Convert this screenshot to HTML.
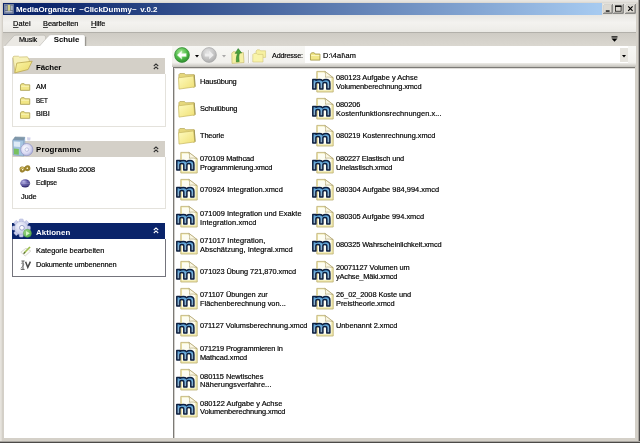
<!DOCTYPE html>
<html lang="de"><head><meta charset="utf-8"><title>MediaOrganizer ~ClickDummy~ v.0.2</title>
<style>
html,body{margin:0;padding:0;background:#d4d0c8;}
body{width:640px;height:443px;position:relative;overflow:hidden;background:#d4d0c8;font-family:"Liberation Sans",sans-serif;font-size:7.4px;line-height:9.0px;color:#000;}
#w{position:absolute;left:0;top:0;width:640px;height:443px;overflow:hidden;filter:blur(0.4px);}
.a{position:absolute;}
.t{position:absolute;white-space:nowrap;-webkit-text-stroke:0.18px currentColor;}
.b{font-weight:bold;-webkit-text-stroke:0;}
.i{position:absolute;display:block;overflow:visible;}
u{text-decoration:underline;text-underline-offset:1px;text-decoration-thickness:0.6px;text-decoration-color:#444;}
</style></head><body><div id="w">
<svg width="0" height="0" style="position:absolute"><defs>
<linearGradient id="fg" x1="0" y1="0" x2="1" y2="1"><stop offset="0" stop-color="#fefbc0"/><stop offset="1" stop-color="#f0e074"/></linearGradient>
<linearGradient id="mg" x1="0" y1="0" x2="0" y2="1"><stop offset="0" stop-color="#4a94cc"/><stop offset="0.4" stop-color="#7ab6e0"/><stop offset="1" stop-color="#98a8ba"/></linearGradient>
<linearGradient id="of" x1="0" y1="0" x2="1" y2="1"><stop offset="0" stop-color="#fbf6a8"/><stop offset="1" stop-color="#ead868"/></linearGradient>
<radialGradient id="cd" cx="0.4" cy="0.4" r="0.7"><stop offset="0" stop-color="#ffffff"/><stop offset="0.6" stop-color="#d8d8f2"/><stop offset="1" stop-color="#a0a4d4"/></radialGradient>
<radialGradient id="gg" cx="0.4" cy="0.35" r="0.75"><stop offset="0" stop-color="#f6f7fd"/><stop offset="0.7" stop-color="#ccd0ea"/><stop offset="1" stop-color="#a6acd4"/></radialGradient>
<linearGradient id="gp" x1="0" y1="0" x2="1" y2="1"><stop offset="0" stop-color="#a8e090"/><stop offset="1" stop-color="#48a83c"/></linearGradient>
<radialGradient id="ec" cx="0.35" cy="0.3" r="0.8"><stop offset="0" stop-color="#b4b0e6"/><stop offset="0.5" stop-color="#4c4496"/><stop offset="1" stop-color="#28225e"/></radialGradient>
<radialGradient id="bk" cx="0.42" cy="0.32" r="0.75"><stop offset="0" stop-color="#a4e894"/><stop offset="0.55" stop-color="#4cb846"/><stop offset="1" stop-color="#2a862c"/></radialGradient>
<radialGradient id="fw" cx="0.42" cy="0.32" r="0.75"><stop offset="0" stop-color="#e6e6e6"/><stop offset="0.6" stop-color="#c2c2c2"/><stop offset="1" stop-color="#a6a6a6"/></radialGradient>
</defs></svg>
<div class="a" style="left:0;top:0;width:640px;height:443px;background:#d4d0c8;"></div>
<div class="a" style="left:0;top:0;width:640px;height:1px;background:#e8e6e2;"></div>
<div class="a" style="left:0;top:1px;width:640px;height:1px;background:#e4e2dd;"></div>
<div class="a" style="left:0;top:2px;width:640px;height:1px;background:#dcd9d3;"></div>
<div class="a" style="left:0;top:0;width:1px;height:443px;background:#e6e3dd;"></div>
<div class="a" style="left:1px;top:0;width:1px;height:443px;background:#e0ddd6;"></div>
<div class="a" style="left:638px;top:0;width:1px;height:443px;background:#a8a5a0;"></div>
<div class="a" style="left:639px;top:0;width:1px;height:443px;background:#4c4a48;"></div>
<div class="a" style="left:0;top:441px;width:640px;height:1px;background:#a8a5a0;"></div>
<div class="a" style="left:0;top:442px;width:640px;height:1px;background:#4c4a48;"></div>
<div class="a" style="left:2.8px;top:2.8px;width:633.6px;height:11.9px;background:linear-gradient(to right,#0a246a 0%,#0a246a 6%,#a6caf0 94%,#a6caf0 100%);"></div>
<div class="a" style="left:601.8px;top:2.8px;width:34.6px;height:11.9px;background:#e2e0da;"></div>
<svg class="i" style="left:4.3px;top:3.8px" width="9.8" height="9.8" viewBox="0 0 9.8 9.8">
<rect x="0" y="0" width="9.8" height="9.8" fill="#7c8aa4"/>
<rect x="0.9" y="0.9" width="8" height="8" fill="#4c5a74"/>
<rect x="3.6" y="1" width="2.8" height="5.8" fill="#d2d088"/>
<rect x="1.2" y="1.4" width="2" height="5" fill="#8e9ab4"/>
<rect x="6.8" y="1.4" width="2" height="5" fill="#a8b0c4"/>
<rect x="1.2" y="7.2" width="7.4" height="1.2" fill="#c8cce0"/>
</svg>
<div class="t b" style="left:16.00px;top:5px;font-size:7.9px;color:#fff;word-spacing:1.6px;letter-spacing:0.02px;">MediaOrganizer ~ClickDummy~ v.0.2</div>
<svg class="i" style="left:602.6px;top:4px" width="9.6" height="9.6" viewBox="0 0 9.6 9.6">
<rect x="0" y="0" width="9.6" height="9.6" fill="#505050"/>
<rect x="0" y="0" width="9.0" height="9" fill="#ffffff"/>
<rect x="0.6" y="0.6" width="8.4" height="8.4" fill="#8c8a86"/>
<rect x="0.6" y="0.6" width="7.8" height="7.8" fill="#dcd9d2"/>
<rect x="2.8" y="6.4" width="3.8" height="1.3" fill="#000"/></svg>
<svg class="i" style="left:612.6px;top:4px" width="10.6" height="9.6" viewBox="0 0 10.6 9.6">
<rect x="0" y="0" width="10.6" height="9.6" fill="#505050"/>
<rect x="0" y="0" width="10.0" height="9" fill="#ffffff"/>
<rect x="0.6" y="0.6" width="9.4" height="8.4" fill="#8c8a86"/>
<rect x="0.6" y="0.6" width="8.799999999999999" height="7.8" fill="#dcd9d2"/>
<rect x="2.5" y="2" width="5.6" height="5.2" fill="none" stroke="#000" stroke-width="0.7"/><rect x="2.2" y="1.6" width="6.2" height="1.3" fill="#000"/></svg>
<svg class="i" style="left:625px;top:4px" width="10.6" height="9.6" viewBox="0 0 10.6 9.6">
<rect x="0" y="0" width="10.6" height="9.6" fill="#505050"/>
<rect x="0" y="0" width="10.0" height="9" fill="#ffffff"/>
<rect x="0.6" y="0.6" width="9.4" height="8.4" fill="#8c8a86"/>
<rect x="0.6" y="0.6" width="8.799999999999999" height="7.8" fill="#dcd9d2"/>
<path d="M3.2 2.4 L7.6 6.8 M7.6 2.4 L3.2 6.8" stroke="#000" stroke-width="1.1"/></svg>
<div class="a" style="left:2.8px;top:14.7px;width:633.6px;height:17.2px;background:linear-gradient(to bottom,#e8e7e3 0%,#f3f2ef 45%,#efeeea 80%,#eae9e5 100%);"></div>
<div class="t" style="left:13.00px;top:19px;letter-spacing:0.107px;"><u>D</u>atei</div>
<div class="t" style="left:43.00px;top:19px;letter-spacing:-0.047px;"><u>B</u>earbeiten</div>
<div class="t" style="left:91.00px;top:19px;letter-spacing:-0.099px;"><u>H</u>ilfe</div>
<div class="a" style="left:2.8px;top:31.7px;width:633.6px;height:14px;background:linear-gradient(to bottom,#cdcac3 0%,#d4d1ca 50%,#dad7d0 100%);"></div>
<div class="a" style="left:2.8px;top:31.7px;width:633.6px;height:0.8px;background:#b2b0aa;"></div>
<svg class="i" style="left:0;top:31.6px" width="120" height="16" viewBox="0 0 120 16"><path d="M4.2 14.6 L13.6 4.2 C14.2 3.5 15 3.2 16 3.2 L43.4 3.2 C44.6 3.2 45.4 4 45.6 5.2 L45.6 14.6 Z" fill="#ebe9e4" stroke="#b4b2ac" stroke-width="0.6"/><path d="M38.8 14.8 L48.4 4 C49.2 3.1 50.2 2.7 51.4 2.7 L82.8 2.7 C84.2 2.7 85.2 3.5 85.2 4.9 L85.2 14.8 Z" fill="#ffffff" stroke="#bab8b2" stroke-width="0.6"/><path d="M85.7 4.8 L85.7 14" stroke="#7c7a74" stroke-width="0.8"/><rect x="3.6" y="14" width="116" height="2" fill="#ffffff"/></svg>
<div class="t" style="left:19.30px;top:35px;letter-spacing:-0.200px;transform:scaleX(0.983);transform-origin:0 0;">Musik</div>
<div class="t b" style="left:53.80px;top:35px;font-size:7.9px;letter-spacing:-0.079px;">Schule</div>
<svg class="i" style="left:611px;top:35.8px" width="7" height="6.4" viewBox="0 0 7 6.4"><rect x="0.5" y="0.3" width="6" height="1.2" fill="#000"/><path d="M0.5 2.4 L6.5 2.4 L3.5 5.8 Z" fill="#000"/></svg>
<div class="a" style="left:3.6px;top:45.6px;width:170px;height:392.1px;background:#ffffff;"></div>
<div class="a" style="left:172px;top:45.7px;width:464.4px;height:21.4px;background:linear-gradient(to bottom,#f7f7f4 0%,#f2f1ed 78%,#e4e2dd 86%,#c2c0ba 100%);"></div>
<svg class="i" style="left:174.3px;top:47.1px" width="16" height="16" viewBox="0 0 16 16">
<circle cx="8" cy="8" r="7.4" fill="url(#bk)" stroke="#2e842e" stroke-width="0.7"/>
<path d="M3.2 8 L7.8 3.8 L7.8 6.4 L12.2 6.4 L12.2 9.6 L7.8 9.6 L7.8 12.2 Z" fill="#ffffff" stroke="#c8f0c0" stroke-width="0.5"/>
</svg>
<svg class="i" style="left:201.4px;top:47.1px" width="16" height="16" viewBox="0 0 16 16">
<circle cx="8" cy="8" r="7.4" fill="url(#fw)" stroke="#a8a8a8" stroke-width="0.7"/>
<path d="M12.8 8 L8.2 3.8 L8.2 6.4 L3.8 6.4 L3.8 9.6 L8.2 9.6 L8.2 12.2 Z" fill="#eeeeee"/>
</svg>
<svg class="i" style="left:230.5px;top:48px" width="14" height="16.5" viewBox="0 0 14 16.5">
<path d="M1 15.4 L0.8 5.2 L2 3.8 L4.6 3.8 L5.6 5 L12.4 4.6 L13 14.6 Z" fill="#f5f0a4" stroke="#c8bc70" stroke-width="0.7"/>
<path d="M5.4 14 C5.2 10 5.6 7.4 6.8 5.2 L4.2 5.4 L7.2 0.6 L10.6 5 L8.6 5 C7.6 7.4 7.6 10 8.2 13.6 Z" fill="#4aa23a" stroke="#2e7a28" stroke-width="0.6" stroke-linejoin="round"/>
</svg>
<svg class="i" style="left:251.5px;top:49px" width="15" height="14" viewBox="0 0 15 14">
<path d="M4 8.4 L4 2 L5.2 0.8 L7.6 0.8 L8.6 1.8 L13.6 1.8 L13.6 8.4 Z" fill="#f6f0a0" stroke="#d0c478" stroke-width="0.6"/>
<path d="M0.8 13 L0.8 5.6 L2 4.4 L4.6 4.4 L5.6 5.4 L11 5.4 L11 13 Z" fill="#f9f4aa" stroke="#d0c478" stroke-width="0.6"/>
</svg>
<svg class="i" style="left:194.5px;top:55px" width="4" height="3" viewBox="0 0 4 3"><path d="M0 0 L4 0 L2 2.5 Z" fill="#000"/></svg>
<svg class="i" style="left:221.5px;top:55px" width="4" height="3" viewBox="0 0 4 3"><path d="M0 0 L4 0 L2 2.5 Z" fill="#a8a8a8"/></svg>
<div class="a" style="left:248px;top:49.5px;width:0.7px;height:13.5px;background:#cfccc5;"></div>
<div class="a" style="left:248.7px;top:49.5px;width:0.7px;height:13.5px;background:#ffffff;"></div>
<div class="t" style="left:271.50px;top:51px;letter-spacing:-0.200px;transform:scaleX(0.978);transform-origin:0 0;">Addresse:</div>
<div class="a" style="left:305px;top:46px;width:323px;height:16.6px;background:#ffffff;"></div>
<svg class="i" style="left:310.20px;top:51.60px" width="10.6" height="8.6" viewBox="0 0 11 8.5" preserveAspectRatio="none">
<path d="M0.5 8 L0.5 2.2 L1.6 0.8 L4.4 0.8 L5.4 2 L10.3 2 L10.3 8 Z" fill="#f1e686" stroke="#a89c4c" stroke-width="0.9"/>
<path d="M1.2 3.5 L9.6 3.5" stroke="#fbf6c0" stroke-width="1"/>
</svg>
<div class="t" style="left:323.00px;top:51px;letter-spacing:0.106px;">D:\4aI\am</div>
<div class="a" style="left:620px;top:48.4px;width:7.6px;height:13.6px;background:#e6e4de;"></div>
<svg class="i" style="left:621.6px;top:54.6px" width="4" height="3" viewBox="0 0 4 3"><path d="M0 0 L4 0 L2 2.5 Z" fill="#000"/></svg>
<div class="a" style="left:173px;top:66.9px;width:461.8px;height:370.8px;background:#ffffff;"></div>
<div class="a" style="left:173px;top:66.9px;width:461.8px;height:1px;background:#7c7a76;"></div>
<div class="a" style="left:173px;top:67px;width:1px;height:371px;background:#7c7a76;"></div>
<div class="a" style="left:174px;top:68px;width:1px;height:370px;background:#d2d0cc;"></div>
<div class="a" style="left:174px;top:68px;width:461px;height:1px;background:#e0deda;"></div>
<svg class="i" style="left:176.20px;top:70.40px" width="22" height="22" viewBox="0 0 22 22">
<path d="M2.9 8 L2.9 4.6 L3.9 3.5 L8.5 3.5 L9.6 4.8 L18.2 4.6 L19.1 16.6 L17.6 17.2 Z" fill="#e6d87c" stroke="#b4a65a" stroke-width="0.7"/>
<path d="M2.5 7.8 L17.6 5.9 L18.8 16.9 L3 19.1 Z" fill="url(#fg)" stroke="#c6b65e" stroke-width="0.7"/>
<path d="M18.3 5 L19.1 16.6" stroke="#9a9050" stroke-width="0.8"/>
</svg>
<div class="t" style="left:200.00px;top:77px;letter-spacing:-0.135px;">Hausübung</div>
<svg class="i" style="left:176.20px;top:97.53px" width="22" height="22" viewBox="0 0 22 22">
<path d="M2.9 8 L2.9 4.6 L3.9 3.5 L8.5 3.5 L9.6 4.8 L18.2 4.6 L19.1 16.6 L17.6 17.2 Z" fill="#e6d87c" stroke="#b4a65a" stroke-width="0.7"/>
<path d="M2.5 7.8 L17.6 5.9 L18.8 16.9 L3 19.1 Z" fill="url(#fg)" stroke="#c6b65e" stroke-width="0.7"/>
<path d="M18.3 5 L19.1 16.6" stroke="#9a9050" stroke-width="0.8"/>
</svg>
<div class="t" style="left:200.00px;top:104px;letter-spacing:-0.175px;">Schulübung</div>
<svg class="i" style="left:176.20px;top:124.66px" width="22" height="22" viewBox="0 0 22 22">
<path d="M2.9 8 L2.9 4.6 L3.9 3.5 L8.5 3.5 L9.6 4.8 L18.2 4.6 L19.1 16.6 L17.6 17.2 Z" fill="#e6d87c" stroke="#b4a65a" stroke-width="0.7"/>
<path d="M2.5 7.8 L17.6 5.9 L18.8 16.9 L3 19.1 Z" fill="url(#fg)" stroke="#c6b65e" stroke-width="0.7"/>
<path d="M18.3 5 L19.1 16.6" stroke="#9a9050" stroke-width="0.8"/>
</svg>
<div class="t" style="left:200.00px;top:131px;letter-spacing:-0.137px;">Theorie</div>
<svg class="i" style="left:176.00px;top:151.99px" width="23" height="23" viewBox="0 0 23 23">
<path d="M4.8 0.4 L12.9 0.4 L21.2 6.7 L21.2 21 L4.8 21 Z" fill="#efe8aa" stroke="#bcae72" stroke-width="0.8" stroke-linejoin="round"/>
<path d="M6 1.6 L12.4 1.6 L19.3 7 L19.3 19.2 L6 19.2 Z" fill="#fdfdf2"/>
<path d="M12.9 0.4 C13.6 2.4 13.8 4.4 13.4 6.3 C16 5.8 18.6 6 21.2 6.7 Z" fill="#fbf8e4" stroke="#a89a68" stroke-width="0.6" stroke-linejoin="round"/>
<path d="M0.8 18 V8.6 H3.9 V9.3 C4.8 8.7 5.9 8.5 7.2 8.5 C8.8 8.5 9.9 8.9 10.6 9.7 C11.4 8.9 12.6 8.5 14 8.5 C16.6 8.5 17.9 10 17.9 12.4 V18 H14.8 V12.9 C14.8 11.8 14.2 11.4 12.85 11.4 C11.5 11.4 10.9 11.8 10.9 12.9 V18 H7.8 V12.9 C7.8 11.8 7.2 11.4 5.85 11.4 C4.5 11.4 3.9 11.8 3.9 12.9 V18 Z" fill="url(#mg)" stroke="#0e2040" stroke-width="1.5" stroke-linejoin="round"/>
</svg>
<div class="t" style="left:200.00px;top:154px;letter-spacing:-0.069px;">070109 Mathcad</div>
<div class="t" style="left:200.00px;top:163px;letter-spacing:-0.130px;">Programmierung.xmcd</div>
<svg class="i" style="left:176.00px;top:179.12px" width="23" height="23" viewBox="0 0 23 23">
<path d="M4.8 0.4 L12.9 0.4 L21.2 6.7 L21.2 21 L4.8 21 Z" fill="#efe8aa" stroke="#bcae72" stroke-width="0.8" stroke-linejoin="round"/>
<path d="M6 1.6 L12.4 1.6 L19.3 7 L19.3 19.2 L6 19.2 Z" fill="#fdfdf2"/>
<path d="M12.9 0.4 C13.6 2.4 13.8 4.4 13.4 6.3 C16 5.8 18.6 6 21.2 6.7 Z" fill="#fbf8e4" stroke="#a89a68" stroke-width="0.6" stroke-linejoin="round"/>
<path d="M0.8 18 V8.6 H3.9 V9.3 C4.8 8.7 5.9 8.5 7.2 8.5 C8.8 8.5 9.9 8.9 10.6 9.7 C11.4 8.9 12.6 8.5 14 8.5 C16.6 8.5 17.9 10 17.9 12.4 V18 H14.8 V12.9 C14.8 11.8 14.2 11.4 12.85 11.4 C11.5 11.4 10.9 11.8 10.9 12.9 V18 H7.8 V12.9 C7.8 11.8 7.2 11.4 5.85 11.4 C4.5 11.4 3.9 11.8 3.9 12.9 V18 Z" fill="url(#mg)" stroke="#0e2040" stroke-width="1.5" stroke-linejoin="round"/>
</svg>
<div class="t" style="left:200.00px;top:185px;letter-spacing:0.063px;">070924 Integration.xmcd</div>
<svg class="i" style="left:176.00px;top:206.25px" width="23" height="23" viewBox="0 0 23 23">
<path d="M4.8 0.4 L12.9 0.4 L21.2 6.7 L21.2 21 L4.8 21 Z" fill="#efe8aa" stroke="#bcae72" stroke-width="0.8" stroke-linejoin="round"/>
<path d="M6 1.6 L12.4 1.6 L19.3 7 L19.3 19.2 L6 19.2 Z" fill="#fdfdf2"/>
<path d="M12.9 0.4 C13.6 2.4 13.8 4.4 13.4 6.3 C16 5.8 18.6 6 21.2 6.7 Z" fill="#fbf8e4" stroke="#a89a68" stroke-width="0.6" stroke-linejoin="round"/>
<path d="M0.8 18 V8.6 H3.9 V9.3 C4.8 8.7 5.9 8.5 7.2 8.5 C8.8 8.5 9.9 8.9 10.6 9.7 C11.4 8.9 12.6 8.5 14 8.5 C16.6 8.5 17.9 10 17.9 12.4 V18 H14.8 V12.9 C14.8 11.8 14.2 11.4 12.85 11.4 C11.5 11.4 10.9 11.8 10.9 12.9 V18 H7.8 V12.9 C7.8 11.8 7.2 11.4 5.85 11.4 C4.5 11.4 3.9 11.8 3.9 12.9 V18 Z" fill="url(#mg)" stroke="#0e2040" stroke-width="1.5" stroke-linejoin="round"/>
</svg>
<div class="t" style="left:200.00px;top:209px;letter-spacing:0.031px;">071009 Integration und Exakte</div>
<div class="t" style="left:200.00px;top:218px;letter-spacing:0.122px;">Integration.xmcd</div>
<svg class="i" style="left:176.00px;top:233.38px" width="23" height="23" viewBox="0 0 23 23">
<path d="M4.8 0.4 L12.9 0.4 L21.2 6.7 L21.2 21 L4.8 21 Z" fill="#efe8aa" stroke="#bcae72" stroke-width="0.8" stroke-linejoin="round"/>
<path d="M6 1.6 L12.4 1.6 L19.3 7 L19.3 19.2 L6 19.2 Z" fill="#fdfdf2"/>
<path d="M12.9 0.4 C13.6 2.4 13.8 4.4 13.4 6.3 C16 5.8 18.6 6 21.2 6.7 Z" fill="#fbf8e4" stroke="#a89a68" stroke-width="0.6" stroke-linejoin="round"/>
<path d="M0.8 18 V8.6 H3.9 V9.3 C4.8 8.7 5.9 8.5 7.2 8.5 C8.8 8.5 9.9 8.9 10.6 9.7 C11.4 8.9 12.6 8.5 14 8.5 C16.6 8.5 17.9 10 17.9 12.4 V18 H14.8 V12.9 C14.8 11.8 14.2 11.4 12.85 11.4 C11.5 11.4 10.9 11.8 10.9 12.9 V18 H7.8 V12.9 C7.8 11.8 7.2 11.4 5.85 11.4 C4.5 11.4 3.9 11.8 3.9 12.9 V18 Z" fill="url(#mg)" stroke="#0e2040" stroke-width="1.5" stroke-linejoin="round"/>
</svg>
<div class="t" style="left:200.00px;top:236px;letter-spacing:0.084px;">071017 Integration,</div>
<div class="t" style="left:200.00px;top:245px;letter-spacing:0.061px;">Abschätzung, Integral.xmcd</div>
<svg class="i" style="left:176.00px;top:260.51px" width="23" height="23" viewBox="0 0 23 23">
<path d="M4.8 0.4 L12.9 0.4 L21.2 6.7 L21.2 21 L4.8 21 Z" fill="#efe8aa" stroke="#bcae72" stroke-width="0.8" stroke-linejoin="round"/>
<path d="M6 1.6 L12.4 1.6 L19.3 7 L19.3 19.2 L6 19.2 Z" fill="#fdfdf2"/>
<path d="M12.9 0.4 C13.6 2.4 13.8 4.4 13.4 6.3 C16 5.8 18.6 6 21.2 6.7 Z" fill="#fbf8e4" stroke="#a89a68" stroke-width="0.6" stroke-linejoin="round"/>
<path d="M0.8 18 V8.6 H3.9 V9.3 C4.8 8.7 5.9 8.5 7.2 8.5 C8.8 8.5 9.9 8.9 10.6 9.7 C11.4 8.9 12.6 8.5 14 8.5 C16.6 8.5 17.9 10 17.9 12.4 V18 H14.8 V12.9 C14.8 11.8 14.2 11.4 12.85 11.4 C11.5 11.4 10.9 11.8 10.9 12.9 V18 H7.8 V12.9 C7.8 11.8 7.2 11.4 5.85 11.4 C4.5 11.4 3.9 11.8 3.9 12.9 V18 Z" fill="url(#mg)" stroke="#0e2040" stroke-width="1.5" stroke-linejoin="round"/>
</svg>
<div class="t" style="left:200.00px;top:267px;letter-spacing:-0.035px;">071023 Übung 721,870.xmcd</div>
<svg class="i" style="left:176.00px;top:287.64px" width="23" height="23" viewBox="0 0 23 23">
<path d="M4.8 0.4 L12.9 0.4 L21.2 6.7 L21.2 21 L4.8 21 Z" fill="#efe8aa" stroke="#bcae72" stroke-width="0.8" stroke-linejoin="round"/>
<path d="M6 1.6 L12.4 1.6 L19.3 7 L19.3 19.2 L6 19.2 Z" fill="#fdfdf2"/>
<path d="M12.9 0.4 C13.6 2.4 13.8 4.4 13.4 6.3 C16 5.8 18.6 6 21.2 6.7 Z" fill="#fbf8e4" stroke="#a89a68" stroke-width="0.6" stroke-linejoin="round"/>
<path d="M0.8 18 V8.6 H3.9 V9.3 C4.8 8.7 5.9 8.5 7.2 8.5 C8.8 8.5 9.9 8.9 10.6 9.7 C11.4 8.9 12.6 8.5 14 8.5 C16.6 8.5 17.9 10 17.9 12.4 V18 H14.8 V12.9 C14.8 11.8 14.2 11.4 12.85 11.4 C11.5 11.4 10.9 11.8 10.9 12.9 V18 H7.8 V12.9 C7.8 11.8 7.2 11.4 5.85 11.4 C4.5 11.4 3.9 11.8 3.9 12.9 V18 Z" fill="url(#mg)" stroke="#0e2040" stroke-width="1.5" stroke-linejoin="round"/>
</svg>
<div class="t" style="left:200.00px;top:290px;letter-spacing:-0.039px;">071107 Übungen zur</div>
<div class="t" style="left:200.00px;top:299px;letter-spacing:0.014px;">Flächenberechnung von...</div>
<svg class="i" style="left:176.00px;top:314.77px" width="23" height="23" viewBox="0 0 23 23">
<path d="M4.8 0.4 L12.9 0.4 L21.2 6.7 L21.2 21 L4.8 21 Z" fill="#efe8aa" stroke="#bcae72" stroke-width="0.8" stroke-linejoin="round"/>
<path d="M6 1.6 L12.4 1.6 L19.3 7 L19.3 19.2 L6 19.2 Z" fill="#fdfdf2"/>
<path d="M12.9 0.4 C13.6 2.4 13.8 4.4 13.4 6.3 C16 5.8 18.6 6 21.2 6.7 Z" fill="#fbf8e4" stroke="#a89a68" stroke-width="0.6" stroke-linejoin="round"/>
<path d="M0.8 18 V8.6 H3.9 V9.3 C4.8 8.7 5.9 8.5 7.2 8.5 C8.8 8.5 9.9 8.9 10.6 9.7 C11.4 8.9 12.6 8.5 14 8.5 C16.6 8.5 17.9 10 17.9 12.4 V18 H14.8 V12.9 C14.8 11.8 14.2 11.4 12.85 11.4 C11.5 11.4 10.9 11.8 10.9 12.9 V18 H7.8 V12.9 C7.8 11.8 7.2 11.4 5.85 11.4 C4.5 11.4 3.9 11.8 3.9 12.9 V18 Z" fill="url(#mg)" stroke="#0e2040" stroke-width="1.5" stroke-linejoin="round"/>
</svg>
<div class="t" style="left:200.00px;top:321px;letter-spacing:-0.066px;">071127 Volumsberechnung.xmcd</div>
<svg class="i" style="left:176.00px;top:341.90px" width="23" height="23" viewBox="0 0 23 23">
<path d="M4.8 0.4 L12.9 0.4 L21.2 6.7 L21.2 21 L4.8 21 Z" fill="#efe8aa" stroke="#bcae72" stroke-width="0.8" stroke-linejoin="round"/>
<path d="M6 1.6 L12.4 1.6 L19.3 7 L19.3 19.2 L6 19.2 Z" fill="#fdfdf2"/>
<path d="M12.9 0.4 C13.6 2.4 13.8 4.4 13.4 6.3 C16 5.8 18.6 6 21.2 6.7 Z" fill="#fbf8e4" stroke="#a89a68" stroke-width="0.6" stroke-linejoin="round"/>
<path d="M0.8 18 V8.6 H3.9 V9.3 C4.8 8.7 5.9 8.5 7.2 8.5 C8.8 8.5 9.9 8.9 10.6 9.7 C11.4 8.9 12.6 8.5 14 8.5 C16.6 8.5 17.9 10 17.9 12.4 V18 H14.8 V12.9 C14.8 11.8 14.2 11.4 12.85 11.4 C11.5 11.4 10.9 11.8 10.9 12.9 V18 H7.8 V12.9 C7.8 11.8 7.2 11.4 5.85 11.4 C4.5 11.4 3.9 11.8 3.9 12.9 V18 Z" fill="url(#mg)" stroke="#0e2040" stroke-width="1.5" stroke-linejoin="round"/>
</svg>
<div class="t" style="left:200.00px;top:344px;letter-spacing:-0.115px;">071219 Programmieren in</div>
<div class="t" style="left:200.00px;top:353px;letter-spacing:-0.080px;">Mathcad.xmcd</div>
<svg class="i" style="left:176.00px;top:369.03px" width="23" height="23" viewBox="0 0 23 23">
<path d="M4.8 0.4 L12.9 0.4 L21.2 6.7 L21.2 21 L4.8 21 Z" fill="#efe8aa" stroke="#bcae72" stroke-width="0.8" stroke-linejoin="round"/>
<path d="M6 1.6 L12.4 1.6 L19.3 7 L19.3 19.2 L6 19.2 Z" fill="#fdfdf2"/>
<path d="M12.9 0.4 C13.6 2.4 13.8 4.4 13.4 6.3 C16 5.8 18.6 6 21.2 6.7 Z" fill="#fbf8e4" stroke="#a89a68" stroke-width="0.6" stroke-linejoin="round"/>
<path d="M0.8 18 V8.6 H3.9 V9.3 C4.8 8.7 5.9 8.5 7.2 8.5 C8.8 8.5 9.9 8.9 10.6 9.7 C11.4 8.9 12.6 8.5 14 8.5 C16.6 8.5 17.9 10 17.9 12.4 V18 H14.8 V12.9 C14.8 11.8 14.2 11.4 12.85 11.4 C11.5 11.4 10.9 11.8 10.9 12.9 V18 H7.8 V12.9 C7.8 11.8 7.2 11.4 5.85 11.4 C4.5 11.4 3.9 11.8 3.9 12.9 V18 Z" fill="url(#mg)" stroke="#0e2040" stroke-width="1.5" stroke-linejoin="round"/>
</svg>
<div class="t" style="left:200.00px;top:372px;letter-spacing:-0.038px;">080115 Newtisches</div>
<div class="t" style="left:200.00px;top:380px;letter-spacing:0.108px;">Näherungsverfahre...</div>
<svg class="i" style="left:176.00px;top:396.16px" width="23" height="23" viewBox="0 0 23 23">
<path d="M4.8 0.4 L12.9 0.4 L21.2 6.7 L21.2 21 L4.8 21 Z" fill="#efe8aa" stroke="#bcae72" stroke-width="0.8" stroke-linejoin="round"/>
<path d="M6 1.6 L12.4 1.6 L19.3 7 L19.3 19.2 L6 19.2 Z" fill="#fdfdf2"/>
<path d="M12.9 0.4 C13.6 2.4 13.8 4.4 13.4 6.3 C16 5.8 18.6 6 21.2 6.7 Z" fill="#fbf8e4" stroke="#a89a68" stroke-width="0.6" stroke-linejoin="round"/>
<path d="M0.8 18 V8.6 H3.9 V9.3 C4.8 8.7 5.9 8.5 7.2 8.5 C8.8 8.5 9.9 8.9 10.6 9.7 C11.4 8.9 12.6 8.5 14 8.5 C16.6 8.5 17.9 10 17.9 12.4 V18 H14.8 V12.9 C14.8 11.8 14.2 11.4 12.85 11.4 C11.5 11.4 10.9 11.8 10.9 12.9 V18 H7.8 V12.9 C7.8 11.8 7.2 11.4 5.85 11.4 C4.5 11.4 3.9 11.8 3.9 12.9 V18 Z" fill="url(#mg)" stroke="#0e2040" stroke-width="1.5" stroke-linejoin="round"/>
</svg>
<div class="t" style="left:200.00px;top:399px;letter-spacing:0.024px;">080122 Aufgabe y Achse</div>
<div class="t" style="left:200.00px;top:407px;letter-spacing:-0.101px;">Volumenberechnung.xmcd</div>
<svg class="i" style="left:312.00px;top:70.60px" width="23" height="23" viewBox="0 0 23 23">
<path d="M4.8 0.4 L12.9 0.4 L21.2 6.7 L21.2 21 L4.8 21 Z" fill="#efe8aa" stroke="#bcae72" stroke-width="0.8" stroke-linejoin="round"/>
<path d="M6 1.6 L12.4 1.6 L19.3 7 L19.3 19.2 L6 19.2 Z" fill="#fdfdf2"/>
<path d="M12.9 0.4 C13.6 2.4 13.8 4.4 13.4 6.3 C16 5.8 18.6 6 21.2 6.7 Z" fill="#fbf8e4" stroke="#a89a68" stroke-width="0.6" stroke-linejoin="round"/>
<path d="M0.8 18 V8.6 H3.9 V9.3 C4.8 8.7 5.9 8.5 7.2 8.5 C8.8 8.5 9.9 8.9 10.6 9.7 C11.4 8.9 12.6 8.5 14 8.5 C16.6 8.5 17.9 10 17.9 12.4 V18 H14.8 V12.9 C14.8 11.8 14.2 11.4 12.85 11.4 C11.5 11.4 10.9 11.8 10.9 12.9 V18 H7.8 V12.9 C7.8 11.8 7.2 11.4 5.85 11.4 C4.5 11.4 3.9 11.8 3.9 12.9 V18 Z" fill="url(#mg)" stroke="#0e2040" stroke-width="1.5" stroke-linejoin="round"/>
</svg>
<div class="t" style="left:336.00px;top:73px;">080123 Aufgabe y Achse</div>
<div class="t" style="left:336.00px;top:82px;letter-spacing:-0.092px;">Volumenberechnung.xmcd</div>
<svg class="i" style="left:312.00px;top:97.73px" width="23" height="23" viewBox="0 0 23 23">
<path d="M4.8 0.4 L12.9 0.4 L21.2 6.7 L21.2 21 L4.8 21 Z" fill="#efe8aa" stroke="#bcae72" stroke-width="0.8" stroke-linejoin="round"/>
<path d="M6 1.6 L12.4 1.6 L19.3 7 L19.3 19.2 L6 19.2 Z" fill="#fdfdf2"/>
<path d="M12.9 0.4 C13.6 2.4 13.8 4.4 13.4 6.3 C16 5.8 18.6 6 21.2 6.7 Z" fill="#fbf8e4" stroke="#a89a68" stroke-width="0.6" stroke-linejoin="round"/>
<path d="M0.8 18 V8.6 H3.9 V9.3 C4.8 8.7 5.9 8.5 7.2 8.5 C8.8 8.5 9.9 8.9 10.6 9.7 C11.4 8.9 12.6 8.5 14 8.5 C16.6 8.5 17.9 10 17.9 12.4 V18 H14.8 V12.9 C14.8 11.8 14.2 11.4 12.85 11.4 C11.5 11.4 10.9 11.8 10.9 12.9 V18 H7.8 V12.9 C7.8 11.8 7.2 11.4 5.85 11.4 C4.5 11.4 3.9 11.8 3.9 12.9 V18 Z" fill="url(#mg)" stroke="#0e2040" stroke-width="1.5" stroke-linejoin="round"/>
</svg>
<div class="t" style="left:336.00px;top:100px;letter-spacing:-0.062px;">080206</div>
<div class="t" style="left:336.00px;top:109px;letter-spacing:0.068px;">Kostenfunktionsrechnungen.x...</div>
<svg class="i" style="left:312.00px;top:124.86px" width="23" height="23" viewBox="0 0 23 23">
<path d="M4.8 0.4 L12.9 0.4 L21.2 6.7 L21.2 21 L4.8 21 Z" fill="#efe8aa" stroke="#bcae72" stroke-width="0.8" stroke-linejoin="round"/>
<path d="M6 1.6 L12.4 1.6 L19.3 7 L19.3 19.2 L6 19.2 Z" fill="#fdfdf2"/>
<path d="M12.9 0.4 C13.6 2.4 13.8 4.4 13.4 6.3 C16 5.8 18.6 6 21.2 6.7 Z" fill="#fbf8e4" stroke="#a89a68" stroke-width="0.6" stroke-linejoin="round"/>
<path d="M0.8 18 V8.6 H3.9 V9.3 C4.8 8.7 5.9 8.5 7.2 8.5 C8.8 8.5 9.9 8.9 10.6 9.7 C11.4 8.9 12.6 8.5 14 8.5 C16.6 8.5 17.9 10 17.9 12.4 V18 H14.8 V12.9 C14.8 11.8 14.2 11.4 12.85 11.4 C11.5 11.4 10.9 11.8 10.9 12.9 V18 H7.8 V12.9 C7.8 11.8 7.2 11.4 5.85 11.4 C4.5 11.4 3.9 11.8 3.9 12.9 V18 Z" fill="url(#mg)" stroke="#0e2040" stroke-width="1.5" stroke-linejoin="round"/>
</svg>
<div class="t" style="left:336.00px;top:131px;letter-spacing:-0.037px;">080219 Kostenrechnung.xmcd</div>
<svg class="i" style="left:312.00px;top:151.99px" width="23" height="23" viewBox="0 0 23 23">
<path d="M4.8 0.4 L12.9 0.4 L21.2 6.7 L21.2 21 L4.8 21 Z" fill="#efe8aa" stroke="#bcae72" stroke-width="0.8" stroke-linejoin="round"/>
<path d="M6 1.6 L12.4 1.6 L19.3 7 L19.3 19.2 L6 19.2 Z" fill="#fdfdf2"/>
<path d="M12.9 0.4 C13.6 2.4 13.8 4.4 13.4 6.3 C16 5.8 18.6 6 21.2 6.7 Z" fill="#fbf8e4" stroke="#a89a68" stroke-width="0.6" stroke-linejoin="round"/>
<path d="M0.8 18 V8.6 H3.9 V9.3 C4.8 8.7 5.9 8.5 7.2 8.5 C8.8 8.5 9.9 8.9 10.6 9.7 C11.4 8.9 12.6 8.5 14 8.5 C16.6 8.5 17.9 10 17.9 12.4 V18 H14.8 V12.9 C14.8 11.8 14.2 11.4 12.85 11.4 C11.5 11.4 10.9 11.8 10.9 12.9 V18 H7.8 V12.9 C7.8 11.8 7.2 11.4 5.85 11.4 C4.5 11.4 3.9 11.8 3.9 12.9 V18 Z" fill="url(#mg)" stroke="#0e2040" stroke-width="1.5" stroke-linejoin="round"/>
</svg>
<div class="t" style="left:336.00px;top:154px;letter-spacing:-0.129px;">080227 Elastisch und</div>
<div class="t" style="left:336.00px;top:163px;letter-spacing:-0.101px;">Unelastisch.xmcd</div>
<svg class="i" style="left:312.00px;top:179.12px" width="23" height="23" viewBox="0 0 23 23">
<path d="M4.8 0.4 L12.9 0.4 L21.2 6.7 L21.2 21 L4.8 21 Z" fill="#efe8aa" stroke="#bcae72" stroke-width="0.8" stroke-linejoin="round"/>
<path d="M6 1.6 L12.4 1.6 L19.3 7 L19.3 19.2 L6 19.2 Z" fill="#fdfdf2"/>
<path d="M12.9 0.4 C13.6 2.4 13.8 4.4 13.4 6.3 C16 5.8 18.6 6 21.2 6.7 Z" fill="#fbf8e4" stroke="#a89a68" stroke-width="0.6" stroke-linejoin="round"/>
<path d="M0.8 18 V8.6 H3.9 V9.3 C4.8 8.7 5.9 8.5 7.2 8.5 C8.8 8.5 9.9 8.9 10.6 9.7 C11.4 8.9 12.6 8.5 14 8.5 C16.6 8.5 17.9 10 17.9 12.4 V18 H14.8 V12.9 C14.8 11.8 14.2 11.4 12.85 11.4 C11.5 11.4 10.9 11.8 10.9 12.9 V18 H7.8 V12.9 C7.8 11.8 7.2 11.4 5.85 11.4 C4.5 11.4 3.9 11.8 3.9 12.9 V18 Z" fill="url(#mg)" stroke="#0e2040" stroke-width="1.5" stroke-linejoin="round"/>
</svg>
<div class="t" style="left:336.00px;top:185px;letter-spacing:0.029px;">080304 Aufgabe 984,994.xmcd</div>
<svg class="i" style="left:312.00px;top:206.25px" width="23" height="23" viewBox="0 0 23 23">
<path d="M4.8 0.4 L12.9 0.4 L21.2 6.7 L21.2 21 L4.8 21 Z" fill="#efe8aa" stroke="#bcae72" stroke-width="0.8" stroke-linejoin="round"/>
<path d="M6 1.6 L12.4 1.6 L19.3 7 L19.3 19.2 L6 19.2 Z" fill="#fdfdf2"/>
<path d="M12.9 0.4 C13.6 2.4 13.8 4.4 13.4 6.3 C16 5.8 18.6 6 21.2 6.7 Z" fill="#fbf8e4" stroke="#a89a68" stroke-width="0.6" stroke-linejoin="round"/>
<path d="M0.8 18 V8.6 H3.9 V9.3 C4.8 8.7 5.9 8.5 7.2 8.5 C8.8 8.5 9.9 8.9 10.6 9.7 C11.4 8.9 12.6 8.5 14 8.5 C16.6 8.5 17.9 10 17.9 12.4 V18 H14.8 V12.9 C14.8 11.8 14.2 11.4 12.85 11.4 C11.5 11.4 10.9 11.8 10.9 12.9 V18 H7.8 V12.9 C7.8 11.8 7.2 11.4 5.85 11.4 C4.5 11.4 3.9 11.8 3.9 12.9 V18 Z" fill="url(#mg)" stroke="#0e2040" stroke-width="1.5" stroke-linejoin="round"/>
</svg>
<div class="t" style="left:336.00px;top:212px;letter-spacing:0.007px;">080305 Aufgabe 994.xmcd</div>
<svg class="i" style="left:312.00px;top:233.38px" width="23" height="23" viewBox="0 0 23 23">
<path d="M4.8 0.4 L12.9 0.4 L21.2 6.7 L21.2 21 L4.8 21 Z" fill="#efe8aa" stroke="#bcae72" stroke-width="0.8" stroke-linejoin="round"/>
<path d="M6 1.6 L12.4 1.6 L19.3 7 L19.3 19.2 L6 19.2 Z" fill="#fdfdf2"/>
<path d="M12.9 0.4 C13.6 2.4 13.8 4.4 13.4 6.3 C16 5.8 18.6 6 21.2 6.7 Z" fill="#fbf8e4" stroke="#a89a68" stroke-width="0.6" stroke-linejoin="round"/>
<path d="M0.8 18 V8.6 H3.9 V9.3 C4.8 8.7 5.9 8.5 7.2 8.5 C8.8 8.5 9.9 8.9 10.6 9.7 C11.4 8.9 12.6 8.5 14 8.5 C16.6 8.5 17.9 10 17.9 12.4 V18 H14.8 V12.9 C14.8 11.8 14.2 11.4 12.85 11.4 C11.5 11.4 10.9 11.8 10.9 12.9 V18 H7.8 V12.9 C7.8 11.8 7.2 11.4 5.85 11.4 C4.5 11.4 3.9 11.8 3.9 12.9 V18 Z" fill="url(#mg)" stroke="#0e2040" stroke-width="1.5" stroke-linejoin="round"/>
</svg>
<div class="t" style="left:336.00px;top:240px;letter-spacing:-0.072px;">080325 Wahrscheinlichkeit.xmcd</div>
<svg class="i" style="left:312.00px;top:260.51px" width="23" height="23" viewBox="0 0 23 23">
<path d="M4.8 0.4 L12.9 0.4 L21.2 6.7 L21.2 21 L4.8 21 Z" fill="#efe8aa" stroke="#bcae72" stroke-width="0.8" stroke-linejoin="round"/>
<path d="M6 1.6 L12.4 1.6 L19.3 7 L19.3 19.2 L6 19.2 Z" fill="#fdfdf2"/>
<path d="M12.9 0.4 C13.6 2.4 13.8 4.4 13.4 6.3 C16 5.8 18.6 6 21.2 6.7 Z" fill="#fbf8e4" stroke="#a89a68" stroke-width="0.6" stroke-linejoin="round"/>
<path d="M0.8 18 V8.6 H3.9 V9.3 C4.8 8.7 5.9 8.5 7.2 8.5 C8.8 8.5 9.9 8.9 10.6 9.7 C11.4 8.9 12.6 8.5 14 8.5 C16.6 8.5 17.9 10 17.9 12.4 V18 H14.8 V12.9 C14.8 11.8 14.2 11.4 12.85 11.4 C11.5 11.4 10.9 11.8 10.9 12.9 V18 H7.8 V12.9 C7.8 11.8 7.2 11.4 5.85 11.4 C4.5 11.4 3.9 11.8 3.9 12.9 V18 Z" fill="url(#mg)" stroke="#0e2040" stroke-width="1.5" stroke-linejoin="round"/>
</svg>
<div class="t" style="left:336.00px;top:263px;letter-spacing:-0.098px;">20071127 Volumen um</div>
<div class="t" style="left:336.00px;top:272px;letter-spacing:-0.148px;">yAchse_Mäki.xmcd</div>
<svg class="i" style="left:312.00px;top:287.64px" width="23" height="23" viewBox="0 0 23 23">
<path d="M4.8 0.4 L12.9 0.4 L21.2 6.7 L21.2 21 L4.8 21 Z" fill="#efe8aa" stroke="#bcae72" stroke-width="0.8" stroke-linejoin="round"/>
<path d="M6 1.6 L12.4 1.6 L19.3 7 L19.3 19.2 L6 19.2 Z" fill="#fdfdf2"/>
<path d="M12.9 0.4 C13.6 2.4 13.8 4.4 13.4 6.3 C16 5.8 18.6 6 21.2 6.7 Z" fill="#fbf8e4" stroke="#a89a68" stroke-width="0.6" stroke-linejoin="round"/>
<path d="M0.8 18 V8.6 H3.9 V9.3 C4.8 8.7 5.9 8.5 7.2 8.5 C8.8 8.5 9.9 8.9 10.6 9.7 C11.4 8.9 12.6 8.5 14 8.5 C16.6 8.5 17.9 10 17.9 12.4 V18 H14.8 V12.9 C14.8 11.8 14.2 11.4 12.85 11.4 C11.5 11.4 10.9 11.8 10.9 12.9 V18 H7.8 V12.9 C7.8 11.8 7.2 11.4 5.85 11.4 C4.5 11.4 3.9 11.8 3.9 12.9 V18 Z" fill="url(#mg)" stroke="#0e2040" stroke-width="1.5" stroke-linejoin="round"/>
</svg>
<div class="t" style="left:336.00px;top:290px;letter-spacing:-0.068px;">26_02_2008 Koste und</div>
<div class="t" style="left:336.00px;top:299px;letter-spacing:-0.033px;">Preistheorie.xmcd</div>
<svg class="i" style="left:312.00px;top:314.77px" width="23" height="23" viewBox="0 0 23 23">
<path d="M4.8 0.4 L12.9 0.4 L21.2 6.7 L21.2 21 L4.8 21 Z" fill="#efe8aa" stroke="#bcae72" stroke-width="0.8" stroke-linejoin="round"/>
<path d="M6 1.6 L12.4 1.6 L19.3 7 L19.3 19.2 L6 19.2 Z" fill="#fdfdf2"/>
<path d="M12.9 0.4 C13.6 2.4 13.8 4.4 13.4 6.3 C16 5.8 18.6 6 21.2 6.7 Z" fill="#fbf8e4" stroke="#a89a68" stroke-width="0.6" stroke-linejoin="round"/>
<path d="M0.8 18 V8.6 H3.9 V9.3 C4.8 8.7 5.9 8.5 7.2 8.5 C8.8 8.5 9.9 8.9 10.6 9.7 C11.4 8.9 12.6 8.5 14 8.5 C16.6 8.5 17.9 10 17.9 12.4 V18 H14.8 V12.9 C14.8 11.8 14.2 11.4 12.85 11.4 C11.5 11.4 10.9 11.8 10.9 12.9 V18 H7.8 V12.9 C7.8 11.8 7.2 11.4 5.85 11.4 C4.5 11.4 3.9 11.8 3.9 12.9 V18 Z" fill="url(#mg)" stroke="#0e2040" stroke-width="1.5" stroke-linejoin="round"/>
</svg>
<div class="t" style="left:336.00px;top:321px;letter-spacing:-0.047px;">Unbenannt 2.xmcd</div>
<div class="a" style="left:12px;top:58.3px;width:153px;height:15.9px;background:#d4d0c8;"></div>
<div class="a" style="left:12px;top:74.2px;width:151.6px;height:52.3px;border:0.7px solid #e4e2dc;border-top:none;"></div>
<svg class="i" style="left:11.5px;top:53.5px" width="22" height="21" viewBox="0 0 22 21">
<path d="M0.9 3 L2 2.2 L6.4 2.2 L7.6 3 L15.4 2.8 L17.3 6 L17.3 8 L3 18.6 Z" fill="#f7f1b8" stroke="#cabd74" stroke-width="0.7"/>
<path d="M4.8 9.1 L20.2 7.2 L16.1 15.5 L2.8 18.9 Z" fill="url(#of)" stroke="#bca850" stroke-width="0.8" stroke-linejoin="round"/>
</svg>
<div class="t b" style="left:36.00px;top:63px;font-size:7.9px;letter-spacing:-0.098px;">Fächer</div>
<svg class="i" style="left:152.7px;top:62.9px" width="6" height="7" viewBox="0 0 6 7">
<path d="M0.8 3 L3 0.9 L5.2 3 M0.8 6 L3 3.9 L5.2 6" fill="none" stroke="#303030" stroke-width="1.05"/></svg>
<svg class="i" style="left:19.90px;top:83.40px" width="10.4" height="7.8" viewBox="0 0 11 8.5" preserveAspectRatio="none">
<path d="M0.5 8 L0.5 2.2 L1.6 0.8 L4.4 0.8 L5.4 2 L10.3 2 L10.3 8 Z" fill="#f1e686" stroke="#a89c4c" stroke-width="0.9"/>
<path d="M1.2 3.5 L9.6 3.5" stroke="#fbf6c0" stroke-width="1"/>
</svg>
<div class="t" style="left:36.00px;top:82px;letter-spacing:-0.200px;transform:scaleX(0.963);transform-origin:0 0;">AM</div>
<svg class="i" style="left:19.90px;top:97.00px" width="10.4" height="7.8" viewBox="0 0 11 8.5" preserveAspectRatio="none">
<path d="M0.5 8 L0.5 2.2 L1.6 0.8 L4.4 0.8 L5.4 2 L10.3 2 L10.3 8 Z" fill="#f1e686" stroke="#a89c4c" stroke-width="0.9"/>
<path d="M1.2 3.5 L9.6 3.5" stroke="#fbf6c0" stroke-width="1"/>
</svg>
<div class="t" style="left:36.00px;top:96px;letter-spacing:-0.200px;transform:scaleX(0.849);transform-origin:0 0;">BET</div>
<svg class="i" style="left:19.90px;top:110.60px" width="10.4" height="7.8" viewBox="0 0 11 8.5" preserveAspectRatio="none">
<path d="M0.5 8 L0.5 2.2 L1.6 0.8 L4.4 0.8 L5.4 2 L10.3 2 L10.3 8 Z" fill="#f1e686" stroke="#a89c4c" stroke-width="0.9"/>
<path d="M1.2 3.5 L9.6 3.5" stroke="#fbf6c0" stroke-width="1"/>
</svg>
<div class="t" style="left:36.00px;top:109px;letter-spacing:-0.092px;">BIBI</div>
<div class="a" style="left:12px;top:140.9px;width:153px;height:15.9px;background:#d4d0c8;"></div>
<div class="a" style="left:12px;top:156.8px;width:151.6px;height:51.7px;border:0.7px solid #e4e2dc;border-top:none;"></div>
<svg class="i" style="left:11.5px;top:135.5px" width="22" height="22" viewBox="0 0 22 22">
<path d="M0.8 4.2 L3 0.9 L12.8 1.2 L11.8 4.6 Z" fill="#7f97a9" stroke="#738b9f" stroke-width="0.5"/>
<path d="M0.8 4 L11.8 4.4 L11.8 20 L1.4 19 Z" fill="#a4c4e0" stroke="#7c9cc0" stroke-width="0.6"/>
<path d="M11.8 4.4 L12.6 1.4 L13.4 16 L11.8 20 Z" fill="#b8cce0" stroke="#7c9cc0" stroke-width="0.5"/>
<path d="M1.8 12.5 L6.8 13 L6.8 18.8 L2 18.2 Z" fill="#78c060"/>
<path d="M1.8 5.6 L8.2 6 L8 11 L1.8 10.6 Z" fill="#deeaf6"/>
<path d="M15 1.2 L18.6 1.6 L18.2 4.6 L15.4 4.4 Z" fill="#d4d4ec"/>
<circle cx="14.8" cy="13.6" r="6.1" fill="url(#cd)" stroke="#9094c4" stroke-width="0.7"/>
<circle cx="14.8" cy="13.6" r="1.8" fill="#f6f6ff" stroke="#9ca0cc" stroke-width="0.6"/>
</svg>
<div class="t b" style="left:36.00px;top:145px;font-size:7.9px;letter-spacing:0.149px;">Programme</div>
<svg class="i" style="left:152.7px;top:145.5px" width="6" height="7" viewBox="0 0 6 7">
<path d="M0.8 3 L3 0.9 L5.2 3 M0.8 6 L3 3.9 L5.2 6" fill="none" stroke="#303030" stroke-width="1.05"/></svg>
<svg class="i" style="left:19.4px;top:165.3px" width="12" height="8" viewBox="0 0 12 8">
<g transform="rotate(-12 6 4)">
<path d="M1.6 4.1 C1.6 1.4 4.4 1.3 6 3.8 C7.6 6.3 10.4 6.2 10.4 3.7 C10.4 1.2 7.6 1.3 6 3.8 C4.4 6.5 1.6 6.6 1.6 4.1 Z" fill="#c8b050" stroke="#9c8430" stroke-width="2.2"/>
<path d="M1.8 3.4 C2.2 1.8 4 1.8 5.2 3.2" fill="none" stroke="#f0dc88" stroke-width="0.9"/>
<circle cx="3.6" cy="4.1" r="0.7" fill="#fffbe6"/><circle cx="8.4" cy="3.8" r="0.7" fill="#fffbe6"/>
</g>
</svg>
<div class="t" style="left:36.00px;top:165px;letter-spacing:-0.139px;">Visual Studio 2008</div>
<svg class="i" style="left:19.8px;top:178.6px" width="11" height="9" viewBox="0 0 11 9">
<ellipse cx="5.2" cy="4.3" rx="4.9" ry="4.1" fill="url(#ec)"/>
<path d="M0.7 3 L9.7 3 M0.4 4.5 L10 4.5 M0.8 6 L9.6 6" stroke="#d8d8f4" stroke-width="0.5" opacity="0.7"/>
</svg>
<div class="t" style="left:36.00px;top:178px;letter-spacing:-0.200px;transform:scaleX(0.936);transform-origin:0 0;">Eclipse</div>
<div class="t" style="left:21.00px;top:192px;letter-spacing:-0.158px;">Jude</div>
<div class="a" style="left:12px;top:222.8px;width:153px;height:15.8px;background:#0a246a;"></div>
<div class="a" style="left:12px;top:238.6px;width:151.6px;height:37.9px;border:0.7px solid #74747c;border-top:none;"></div>
<svg class="i" style="left:11.5px;top:217px" width="22" height="23" viewBox="0 0 22 23">
<g transform="translate(9.3 11)">
<g fill="#cdd1ec" stroke="#a8aed6" stroke-width="0.5">
<rect x="-2" y="-9" width="4" height="18" rx="1"/>
<rect x="-2" y="-9" width="4" height="18" rx="1" transform="rotate(45)"/>
<rect x="-2" y="-9" width="4" height="18" rx="1" transform="rotate(90)"/>
<rect x="-2" y="-9" width="4" height="18" rx="1" transform="rotate(135)"/>
</g>
<circle r="6.8" fill="url(#gg)" stroke="#a8aed6" stroke-width="0.5"/>
<circle cx="0.6" cy="-0.2" r="2.4" fill="#fcfcff" stroke="#8890bc" stroke-width="0.8"/>
</g>
<circle cx="15.4" cy="16.3" r="4" fill="url(#gp)" stroke="#4c9c40" stroke-width="0.5"/>
<path d="M14 13.9 L17.8 16.3 L14 18.7 Z" fill="#d8f4c8"/>
</svg>
<div class="t b" style="left:36.00px;top:228px;font-size:7.9px;letter-spacing:0.067px;color:#fff;">Aktionen</div>
<svg class="i" style="left:152.7px;top:227.4px" width="6" height="7" viewBox="0 0 6 7">
<path d="M0.8 3 L3 0.9 L5.2 3 M0.8 6 L3 3.9 L5.2 6" fill="none" stroke="#ffffff" stroke-width="1.05"/></svg>
<svg class="i" style="left:19.6px;top:246.2px" width="12" height="11" viewBox="0 0 12 11">
<path d="M0.8 6.2 L6 2.2 L10.8 5 L5.2 10 Z" fill="#fbfbf6" stroke="#c2c2b8" stroke-width="0.6"/>
<path d="M4.2 7 L10 1" fill="none" stroke="#94b848" stroke-width="1.7"/>
<path d="M3.6 7.8 L5 6.2" fill="none" stroke="#5c6c38" stroke-width="1.2"/>
<path d="M5.6 6.2 L10.2 1.6" fill="none" stroke="#dce890" stroke-width="0.6"/>
</svg>
<div class="t" style="left:36.00px;top:246px;letter-spacing:-0.016px;">Kategorie bearbeiten</div>
<svg class="i" style="left:19.6px;top:259.8px" width="12" height="11" viewBox="0 0 12 11">
<path d="M1.4 1 L4.6 1 M3 1 L3 9.4 M0.8 9.4 L4.6 9.4" stroke="#505050" stroke-width="0.9" fill="none"/>
<path d="M1.2 3.4 C2.6 2.4 4.4 3.4 3.6 5 C3 6 1.6 7.2 1 8.4" stroke="#707070" stroke-width="0.8" fill="none"/>
<path d="M5.6 1.8 L7.8 7.4 L10.4 1.6" stroke="#484848" stroke-width="1.5" fill="none"/>
</svg>
<div class="t" style="left:36.00px;top:260px;letter-spacing:-0.125px;">Dokumente umbenennen</div>
</div></body></html>
